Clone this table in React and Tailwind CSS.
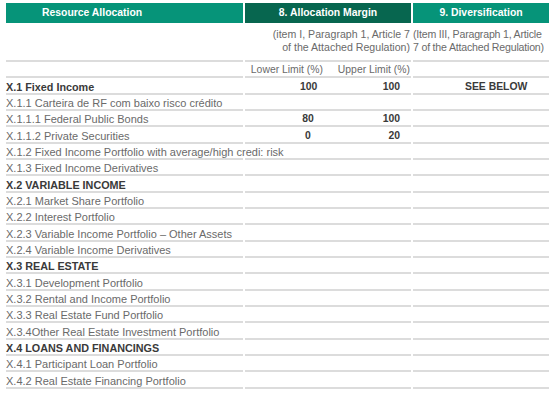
import React from "react";

const rows = [
  { t: "X.1 Fixed Income", b: true, lo: "100", up: "100", d: "SEE BELOW" },
  { t: "X.1.1 Carteira de RF com baixo risco crédito" },
  { t: "X.1.1.1 Federal Public Bonds", lo: "80", up: "100" },
  { t: "X.1.1.2 Private Securities", lo: "0", up: "20" },
  { t: "X.1.2 Fixed Income Portfolio with average/high credi: risk" },
  { t: "X.1.3 Fixed Income Derivatives" },
  { t: "X.2 VARIABLE INCOME", b: true },
  { t: "X.2.1  Market Share Portfolio" },
  { t: "X.2.2 Interest Portfolio" },
  { t: "X.2.3 Variable Income Portfolio – Other Assets" },
  { t: "X.2.4 Variable Income Derivatives" },
  { t: "X.3 REAL ESTATE", b: true },
  { t: "X.3.1 Development Portfolio" },
  { t: "X.3.2 Rental and Income Portfolio" },
  { t: "X.3.3 Real Estate Fund Portfolio" },
  { t: "X.3.4Other Real Estate Investment Portfolio" },
  { t: "X.4 LOANS AND FINANCINGS", b: true },
  { t: "X.4.1 Participant Loan Portfolio" },
  { t: "X.4.2 Real Estate Financing Portfolio" },
];

export default function App() {
  return (
    <div className="w-[552px] h-[398px] bg-white overflow-hidden pt-[3px] pl-[6px] font-['Liberation_Sans',Arial,sans-serif] text-[11px] text-[#6a6a6a]">
      {/* header */}
      <div className="flex gap-[2px] h-[20px] text-white font-bold text-[10.4px] leading-[20px]">
        <div className="w-[237px] bg-[#069479] pl-[36px]">Resource Allocation</div>
        <div className="w-[166px] bg-[#07664f] text-center">8. Allocation Margin</div>
        <div className="w-[136px] bg-[#069479] text-center">9. Diversification</div>
      </div>
      {/* sub header */}
      <div className="flex gap-[2px] h-[39px] leading-[13px] text-[10.6px]">
        <div className="w-[237px] border-b-2 border-[#dcdcdc]"></div>
        <div className="w-[166px] border-b-2 border-[#dcdcdc] text-right pt-[5px] pr-[1px] whitespace-nowrap">
          <div>(item I, Paragraph 1, Article 7</div>
          <div>of the Attached Regulation)</div>
        </div>
        <div className="w-[136px] border-b-2 border-[#dcdcdc] pt-[5px] whitespace-nowrap tracking-[-0.2px]">
          <div>(Item III, Paragraph 1, Article</div>
          <div>7 of the Attached Regulation)</div>
        </div>
      </div>
      <div className="flex gap-[2px] h-[16.33px] leading-[12px] text-[10.4px]">
        <div className="w-[237px] border-b-2 border-[#dcdcdc]"></div>
        <div className="w-[166px] border-b-2 border-[#dcdcdc] flex items-end">
          <div className="w-[83px] text-right pr-[5px]">Lower Limit (%)</div>
          <div className="w-[83px] text-right pr-[1px]">Upper Limit (%)</div>
        </div>
        <div className="w-[136px] border-b-2 border-[#dcdcdc]"></div>
      </div>
      {rows.map((r, i) => (
        <div key={i} className={"flex gap-[2px] h-[16.33px] leading-[12px] " + (r.b ? "font-bold text-[#3a3a3a] text-[10.8px]" : "")}>
          <div className="w-[237px] border-b-2 border-[#dcdcdc] flex items-end whitespace-nowrap">{r.t}</div>
          <div className="w-[166px] border-b-2 border-[#dcdcdc] flex items-end text-[#3a3a3a] font-bold text-[10.4px]">
            <div className="w-[55px]"></div>
            <div className="w-[16px] text-center">{r.lo}</div>
            <div className="w-[54px]"></div>
            <div className="w-[30px] text-right">{r.up}</div>
          </div>
          <div className="w-[136px] border-b-2 border-[#dcdcdc] flex items-end text-[#3a3a3a] font-bold text-[10.4px] pl-[52px]">{r.d}</div>
        </div>
      ))}
    </div>
  );
}
